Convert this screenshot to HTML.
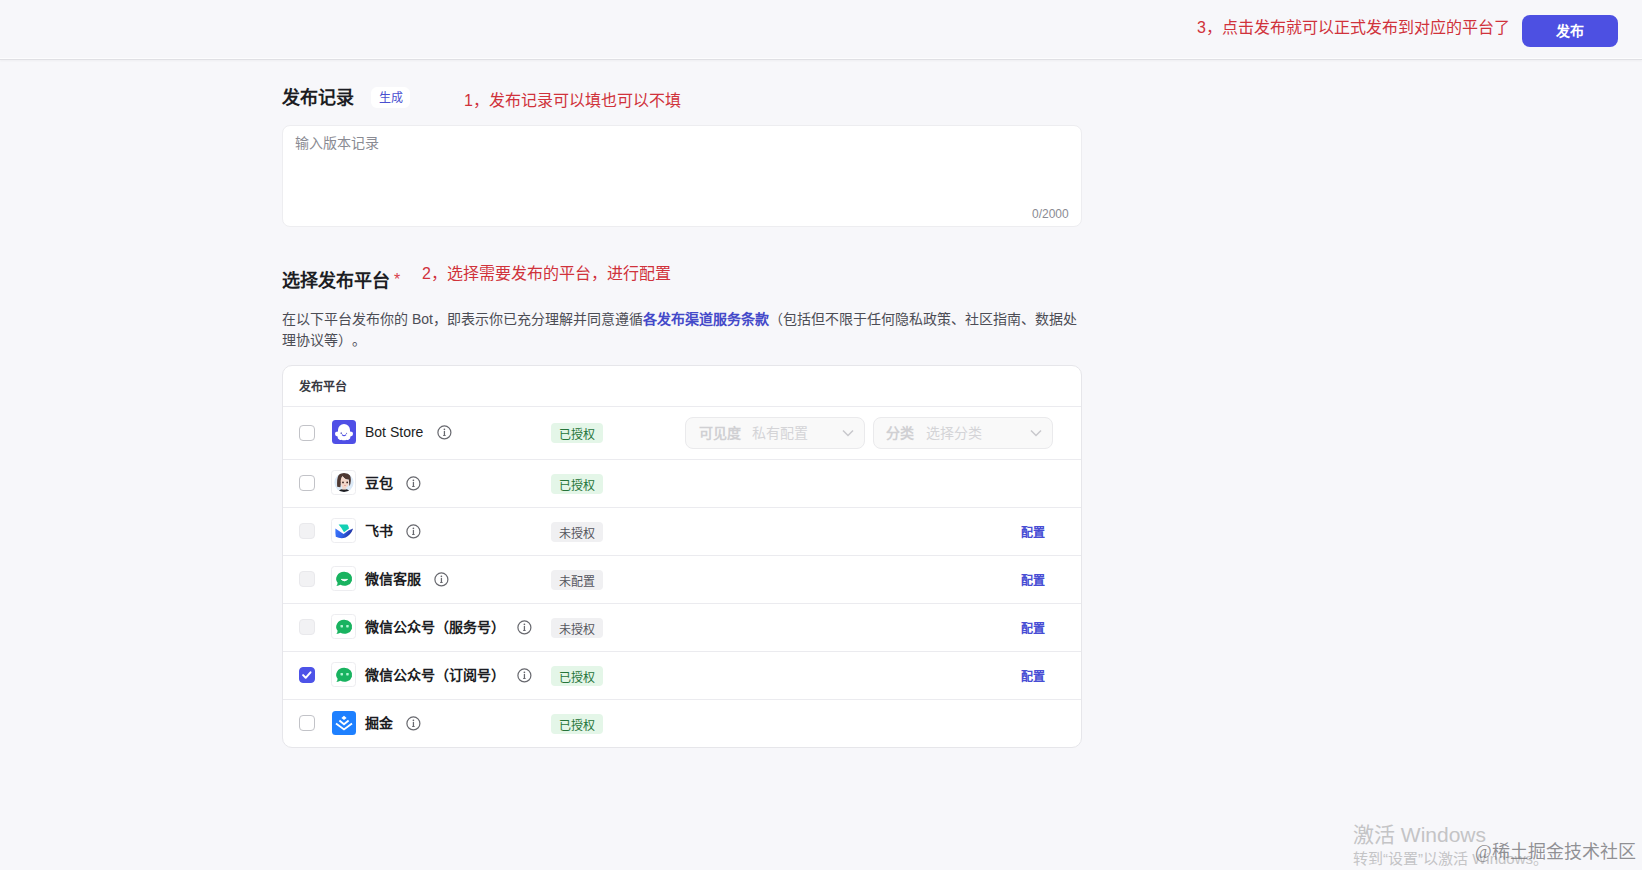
<!DOCTYPE html>
<html lang="zh-CN"><head><meta charset="utf-8">
<style>
*{box-sizing:border-box;margin:0;padding:0}
html,body{text-spacing-trim:space-all;width:1642px;height:870px;overflow:hidden;background:#f7f7fa;font-family:"Liberation Sans",sans-serif;color:#1c1d23}
.abs{position:absolute}
.header{position:absolute;left:0;top:0;width:1642px;height:60px;background:#f7f7fa;border-bottom:1px solid #e0e0e4;box-shadow:inset 0 -1px 0 #fdfdfe,0 1px 2px rgba(0,0,0,0.04)}
.pub{position:absolute;left:1522px;top:15px;width:96px;height:32px;border-radius:8px;background:#4d50e2;color:#fff;font-size:14px;font-weight:bold;text-align:center;line-height:32px}
.red{position:absolute;color:#d0323b;font-size:16px;white-space:nowrap}
.title{position:absolute;font-size:18px;font-weight:bold;color:#1c1d23;white-space:nowrap}
.gen{position:absolute;left:371px;top:87px;width:39px;height:21px;border-radius:6px;background:#fff;color:#4a4fd0;font-size:12px;text-align:center;line-height:20px;padding-top:1px}
.ta{position:absolute;left:282px;top:125px;width:800px;height:102px;background:#fff;border:1px solid #ededf0;border-radius:8px}
.ph{position:absolute;left:295px;top:132px;font-size:14px;color:#8a8b93}
.cnt{position:absolute;left:1032px;top:207px;font-size:12px;color:#8a8b93}
.desc{position:absolute;left:282px;top:309px;width:800px;font-size:14px;line-height:21px;color:#4c4d55}
.desc b{color:#4449c9}
.card{position:absolute;left:282px;top:365px;width:800px;height:383px;background:#fff;border:1px solid #e6e6ea;border-radius:10px}

.hdr{position:absolute;left:299px;top:377px;font-size:12px;font-weight:bold;color:#383942;white-space:nowrap}
.sep{position:absolute;left:283px;width:798px;height:1px;background:#ebebef}
.cb{position:absolute;left:299px;width:16px;height:16px;border-radius:4px;border:1px solid #c2c3c8;background:#fff}
.cb.dis{background:#f2f2f4;border-color:#e9e9ec}
.cb.on{background:#4d53e8;border-color:#4d53e8}
.sq{position:absolute}
.ic{position:absolute;left:331px;width:25px;height:25px;border-radius:3.5px;border:1px solid #ededf0;background:#fff;overflow:hidden}
.nm{position:absolute;left:365px;font-size:14px;font-weight:bold;color:#1c1d23;white-space:nowrap;line-height:20px}
.info{position:absolute;width:15px;height:15px}
.tag{position:absolute;left:551px;width:52px;height:20px;border-radius:4px;font-size:12px;line-height:20px;text-align:center;padding-top:4px;line-height:16px}
.tag.g{background:#e4f6e8;color:#26743a}
.tag.n{background:#f0f0f2;color:#55565e}
.cfg{position:absolute;left:1021px;font-size:12px;color:#474cd4;font-weight:bold;line-height:20px;padding-top:2px}
.sel{position:absolute;top:417px;width:180px;height:32px;border-radius:8px;border:1px solid #eaeaec;background:#f9f9f9}
.sel .k{position:absolute;left:13px;top:4px;font-size:14px;font-weight:bold;color:#d0d0d3}
.sel .v{position:absolute;top:4px;font-size:14px;color:#d4d4d7}
.sel svg{position:absolute;right:10px;top:11px}
</style></head><body>
<div class="header"></div>
<div class="red" style="left:1197px;top:14px">3，点击发布就可以正式发布到对应的平台了</div>
<div class="pub">发布</div>

<div class="title" style="left:282px;top:83px">发布记录</div>
<div class="gen">生成</div>
<div class="red" style="left:464px;top:87px">1，发布记录可以填也可以不填</div>
<div class="ta"></div>
<div class="ph">输入版本记录</div>
<div class="cnt">0/2000</div>

<div class="title" style="left:282px;top:266px">选择发布平台<span style="position:relative;top:-2px;color:#d8404a;font-size:16px;font-weight:normal;margin-left:4px">*</span></div>
<div class="red" style="left:422px;top:260px">2，选择需要发布的平台，进行配置</div>
<div class="desc" style="white-space:nowrap;width:auto">在以下平台发布你的 Bot，即表示你已充分理解并同意遵循<b>各发布渠道服务条款</b>（包括但不限于任何隐私政策、社区指南、数据处<br>理协议等）。</div>

<div class="card"></div>
<div class="hdr">发布平台</div>
<div class="sep" style="top:406px"></div>
<div class="sep" style="top:459px"></div>
<div class="sep" style="top:507px"></div>
<div class="sep" style="top:555px"></div>
<div class="sep" style="top:603px"></div>
<div class="sep" style="top:651px"></div>
<div class="sep" style="top:699px"></div>
<div class="cb " style="top:425px"></div>
<svg class="sq" style="left:332px;top:420px" width="24" height="24" viewBox="0 0 24 24"><rect width="24" height="24" rx="3.5" fill="#4f4fe6"/><path d="M6 11.6 L6 10 A6 6 0 0 1 18 10 L18 11.6 Q21 11.6 21 14 Q21 16.4 18.4 16.6 Q18.6 19 16.8 19.4 Q15.8 20.4 14.2 19.8 Q13.2 20.6 12 20.2 Q10.8 20.6 9.8 19.8 Q8.2 20.4 7.2 19.4 Q5.4 19 5.6 16.6 Q3 16.4 3 14 Q3 11.6 6 11.6 Z" fill="#fff"/><ellipse cx="9.2" cy="13.2" rx="0.6" ry="0.9" fill="#3b3fb5"/><circle cx="14.6" cy="13.3" r="0.55" fill="#3b3fb5"/><path d="M10.3 14.8 Q12 16.5 13.8 14.8" fill="none" stroke="#4f4fe6" stroke-width="1.1" stroke-linecap="round"/></svg>
<div class="nm" style="top:422px;font-weight:normal">Bot Store</div>
<svg class="info" style="left:437px;top:425px" viewBox="0 0 15 15"><circle cx="7.4" cy="7.4" r="6.5" fill="none" stroke="#67686e" stroke-width="1.2"/><circle cx="7.4" cy="4.3" r="0.85" fill="#67686e"/><rect x="6.8" y="6" width="1.25" height="4.6" fill="#67686e"/><rect x="6.1" y="9.9" width="2.6" height="1" rx="0.3" fill="#67686e"/></svg>
<div class="tag g" style="top:423px">已授权</div>
<div class="cb " style="top:475px"></div>
<div class="ic" style="top:470px"><svg width="23" height="23" viewBox="0 0 23 23" style="position:absolute;left:0;top:0"><defs><clipPath id="cc"><circle cx="12" cy="11.5" r="9.6"/></clipPath></defs><circle cx="12" cy="11.5" r="9.6" fill="#dbe9f7"/><g clip-path="url(#cc)"><path d="M6 22 Q6.5 18.2 12 18 Q17.5 18.2 18.5 22 Z" fill="#1e1e22"/><rect x="10.3" y="14" width="3.6" height="4.6" fill="#f1d9cc"/><path d="M5.2 15.8 Q4.4 5 8.2 2.6 Q12 0.2 15.8 2 Q19.2 4.2 18.8 10 Q18.6 13.6 17.4 15.2 L16.8 8.6 Q13 8.8 10.4 5 Q9.2 8 8.4 16.2 Z" fill="#4e3832"/><path d="M8.6 10 Q9.4 5.6 10.6 5.6 Q13 8.8 16.6 9 Q17.4 13.4 15.6 15.6 Q13.6 17.6 11.4 16.8 Q8.8 15.6 8.6 10 Z" fill="#f3d6c8"/><circle cx="11" cy="11.4" r="0.9" fill="#3a2320"/><circle cx="15.2" cy="11.4" r="0.9" fill="#3a2320"/><path d="M12.2 14.4 Q13 14.8 13.8 14.4" fill="none" stroke="#d77a7a" stroke-width="0.7"/></g></svg></div>
<div class="nm" style="top:473px">豆包</div>
<svg class="info" style="left:406px;top:476px" viewBox="0 0 15 15"><circle cx="7.4" cy="7.4" r="6.5" fill="none" stroke="#67686e" stroke-width="1.2"/><circle cx="7.4" cy="4.3" r="0.85" fill="#67686e"/><rect x="6.8" y="6" width="1.25" height="4.6" fill="#67686e"/><rect x="6.1" y="9.9" width="2.6" height="1" rx="0.3" fill="#67686e"/></svg>
<div class="tag g" style="top:474px">已授权</div>
<div class="cb dis" style="top:523px"></div>
<div class="ic" style="top:518px"><svg width="23" height="23" viewBox="0 0 23 23" style="position:absolute;left:0;top:0"><defs><linearGradient id="fsg" x1="0" y1="0" x2="1" y2="0.3"><stop offset="0" stop-color="#3c78ff"/><stop offset="0.55" stop-color="#2f5fe6"/><stop offset="1" stop-color="#1f2f9a"/></linearGradient></defs><path d="M6.6 5.4 L15.4 5.4 Q16.6 7 17 9.4 L12 13.2 Q9.6 8.6 6.6 5.4 Z" fill="#14d0b4"/><path d="M3.4 9.6 Q8 12.8 11.6 15 Q16.4 10.8 21.2 9.6 Q18.6 16.4 13.6 18.6 Q8.6 20.2 3.8 17.8 Q3.2 13.6 3.4 9.6 Z" fill="url(#fsg)"/></svg></div>
<div class="nm" style="top:521px">飞书</div>
<svg class="info" style="left:406px;top:524px" viewBox="0 0 15 15"><circle cx="7.4" cy="7.4" r="6.5" fill="none" stroke="#67686e" stroke-width="1.2"/><circle cx="7.4" cy="4.3" r="0.85" fill="#67686e"/><rect x="6.8" y="6" width="1.25" height="4.6" fill="#67686e"/><rect x="6.1" y="9.9" width="2.6" height="1" rx="0.3" fill="#67686e"/></svg>
<div class="tag n" style="top:522px">未授权</div>
<div class="cfg" style="top:521px">配置</div>
<div class="cb dis" style="top:571px"></div>
<div class="ic" style="top:566px"><svg width="23" height="23" viewBox="0 0 23 23" style="position:absolute;left:0;top:0"><path d="M12.4 4.8 A7.8 7 0 1 1 8.4 17.8 Q6.8 18.9 4.4 18.9 Q5.6 17.6 5.6 15.8 A7.8 7 0 0 1 12.4 4.8 Z" fill="#19b360"/><path d="M9.2 12.4 Q12.4 15.4 15.6 12.4 Z" fill="#fff" stroke="#fff" stroke-width="0.8" stroke-linejoin="round"/></svg></div>
<div class="nm" style="top:569px">微信客服</div>
<svg class="info" style="left:434px;top:572px" viewBox="0 0 15 15"><circle cx="7.4" cy="7.4" r="6.5" fill="none" stroke="#67686e" stroke-width="1.2"/><circle cx="7.4" cy="4.3" r="0.85" fill="#67686e"/><rect x="6.8" y="6" width="1.25" height="4.6" fill="#67686e"/><rect x="6.1" y="9.9" width="2.6" height="1" rx="0.3" fill="#67686e"/></svg>
<div class="tag n" style="top:570px">未配置</div>
<div class="cfg" style="top:569px">配置</div>
<div class="cb dis" style="top:619px"></div>
<div class="ic" style="top:614px"><svg width="23" height="23" viewBox="0 0 23 23" style="position:absolute;left:0;top:0"><path d="M12.4 4.8 A7.8 7 0 1 1 8.4 17.8 Q6.8 18.9 4.4 18.9 Q5.6 17.6 5.6 15.8 A7.8 7 0 0 1 12.4 4.8 Z" fill="#19b360"/><rect x="8.5" y="9.9" width="2.5" height="2.5" rx="0.6" fill="#b4f5d3"/><rect x="14.2" y="9.9" width="2.5" height="2.5" rx="0.6" fill="#b4f5d3"/></svg></div>
<div class="nm" style="top:617px">微信公众号（服务号）</div>
<svg class="info" style="left:517px;top:620px" viewBox="0 0 15 15"><circle cx="7.4" cy="7.4" r="6.5" fill="none" stroke="#67686e" stroke-width="1.2"/><circle cx="7.4" cy="4.3" r="0.85" fill="#67686e"/><rect x="6.8" y="6" width="1.25" height="4.6" fill="#67686e"/><rect x="6.1" y="9.9" width="2.6" height="1" rx="0.3" fill="#67686e"/></svg>
<div class="tag n" style="top:618px">未授权</div>
<div class="cfg" style="top:617px">配置</div>
<div class="cb on" style="top:667px"><svg width="14" height="14" viewBox="0 0 14 14" style="position:absolute;left:0;top:0"><path d="M3.1 7.1 L5.7 9.8 L10.5 4.3" fill="none" stroke="#fff" stroke-width="2" stroke-linecap="round" stroke-linejoin="round"/></svg></div>
<div class="ic" style="top:662px"><svg width="23" height="23" viewBox="0 0 23 23" style="position:absolute;left:0;top:0"><path d="M12.4 4.8 A7.8 7 0 1 1 8.4 17.8 Q6.8 18.9 4.4 18.9 Q5.6 17.6 5.6 15.8 A7.8 7 0 0 1 12.4 4.8 Z" fill="#19b360"/><rect x="8.5" y="9.9" width="2.5" height="2.5" rx="0.6" fill="#b4f5d3"/><rect x="14.2" y="9.9" width="2.5" height="2.5" rx="0.6" fill="#b4f5d3"/></svg></div>
<div class="nm" style="top:665px">微信公众号（订阅号）</div>
<svg class="info" style="left:517px;top:668px" viewBox="0 0 15 15"><circle cx="7.4" cy="7.4" r="6.5" fill="none" stroke="#67686e" stroke-width="1.2"/><circle cx="7.4" cy="4.3" r="0.85" fill="#67686e"/><rect x="6.8" y="6" width="1.25" height="4.6" fill="#67686e"/><rect x="6.1" y="9.9" width="2.6" height="1" rx="0.3" fill="#67686e"/></svg>
<div class="tag g" style="top:666px">已授权</div>
<div class="cfg" style="top:665px">配置</div>
<div class="cb " style="top:715px"></div>
<svg class="sq" style="left:332px;top:711px" width="24" height="24" viewBox="0 0 24 24"><rect width="24" height="24" rx="3.5" fill="#1e80ff"/><path d="M12 4.8 L14.6 6.9 L12 9 L9.4 6.9 Z" fill="#fff"/><path d="M7.4 9.6 L12 13.2 L16.6 9.6" fill="none" stroke="#fff" stroke-width="1.9" stroke-linejoin="miter"/><path d="M4 12.4 L12 18.4 L20 12.4" fill="none" stroke="#fff" stroke-width="1.9" stroke-linejoin="miter"/></svg>
<div class="nm" style="top:713px">掘金</div>
<svg class="info" style="left:406px;top:716px" viewBox="0 0 15 15"><circle cx="7.4" cy="7.4" r="6.5" fill="none" stroke="#67686e" stroke-width="1.2"/><circle cx="7.4" cy="4.3" r="0.85" fill="#67686e"/><rect x="6.8" y="6" width="1.25" height="4.6" fill="#67686e"/><rect x="6.1" y="9.9" width="2.6" height="1" rx="0.3" fill="#67686e"/></svg>
<div class="tag g" style="top:714px">已授权</div>
<div class="sel" style="left:685px"><span class="k">可见度</span><span class="v" style="left:66px">私有配置</span><svg width="12" height="8" viewBox="0 0 12 8"><path d="M1 1.5 L6 6.5 L11 1.5" fill="none" stroke="#c8c8cc" stroke-width="1.5"/></svg></div>
<div class="sel" style="left:873px"><span class="k" style="left:12px">分类</span><span class="v" style="left:52px">选择分类</span><svg width="12" height="8" viewBox="0 0 12 8"><path d="M1 1.5 L6 6.5 L11 1.5" fill="none" stroke="#c8c8cc" stroke-width="1.5"/></svg></div>

<div class="abs" style="left:1353px;top:821px;font-size:21px;line-height:28px;color:#c4c4c6;white-space:nowrap">激活 Windows</div>
<div class="abs" style="left:1353px;top:849px;font-size:15px;line-height:20px;color:#c4c4c6;white-space:nowrap">转到“设置”以激活 Windows。</div>
<div class="abs" style="left:1475px;top:840px;font-family:'Liberation Serif',serif;font-size:18px;line-height:24px;color:rgba(110,110,114,0.75);white-space:nowrap">@稀土掘金技术社区</div>
</body></html>
